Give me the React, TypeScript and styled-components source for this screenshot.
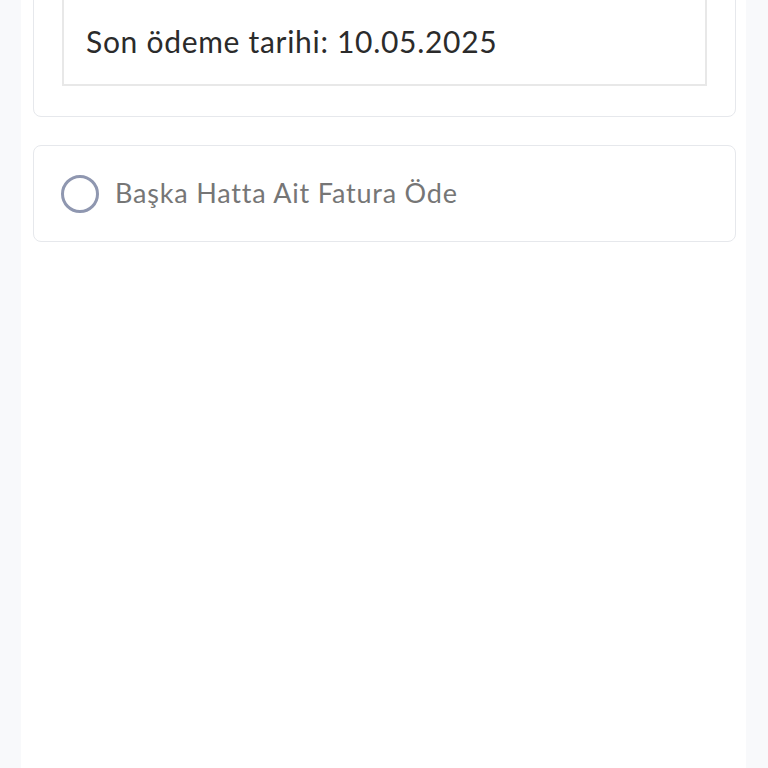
import React from "react";
import styled, { createGlobalStyle } from "styled-components";

const Global = createGlobalStyle`
  html, body { margin: 0; padding: 0; background: #f8f9fb; }
  body { font-family: Lato, "Noto Sans", sans-serif; overflow: hidden; }
`;

const Page = styled.div`
  display: flex;
  justify-content: flex-start;
  height: 768px;
  overflow: hidden;
`;

const Content = styled.main`
  margin-left: 21px;
  width: 725px;
  background: #ffffff;
  padding: 0 10px 0 12px;
  box-sizing: border-box;
  display: flex;
  flex-direction: column;
  gap: 28px;
`;

const Card = styled.section<{ $top?: number }>`
  margin-top: ${(p) => p.$top ?? 0}px;
  border: 1.5px solid #e6e8ec;
  border-radius: 8px;
  background: #fff;
  box-sizing: border-box;
`;

const InfoCard = styled(Card)`
  padding: 28px 28px 30px 28px;
`;

const InfoBox = styled.div`
  border: 2px solid #e8e8e8;
  border-top: none;
  padding: 54px 24px 25px 22px;
  font-size: 30px;
  letter-spacing: 0.7px;
  line-height: 36px;
  color: #2b2b2b;
`;

const OptionCard = styled(Card)`
  height: 97px;
  display: flex;
  align-items: center;
  padding: 0 27px;
  gap: 16px;
`;

const Radio = styled.span`
  width: 32px;
  height: 32px;
  border-radius: 50%;
  border: 3px solid #8f97b0;
  flex: none;
`;

const OptionLabel = styled.span`
  font-size: 27px;
  letter-spacing: 0.8px;
  color: #767676;
  line-height: 32px;
  margin-top: -2px;
`;

export default function App() {
  return (
    <>
      <Global />
      <Page>
        <Content>
          <InfoCard $top={-60}>
            <InfoBox>Son ödeme tarihi: 10.05.2025</InfoBox>
          </InfoCard>
          <OptionCard>
            <Radio />
            <OptionLabel>Başka Hatta Ait Fatura Öde</OptionLabel>
          </OptionCard>
        </Content>
      </Page>
    </>
  );
}
